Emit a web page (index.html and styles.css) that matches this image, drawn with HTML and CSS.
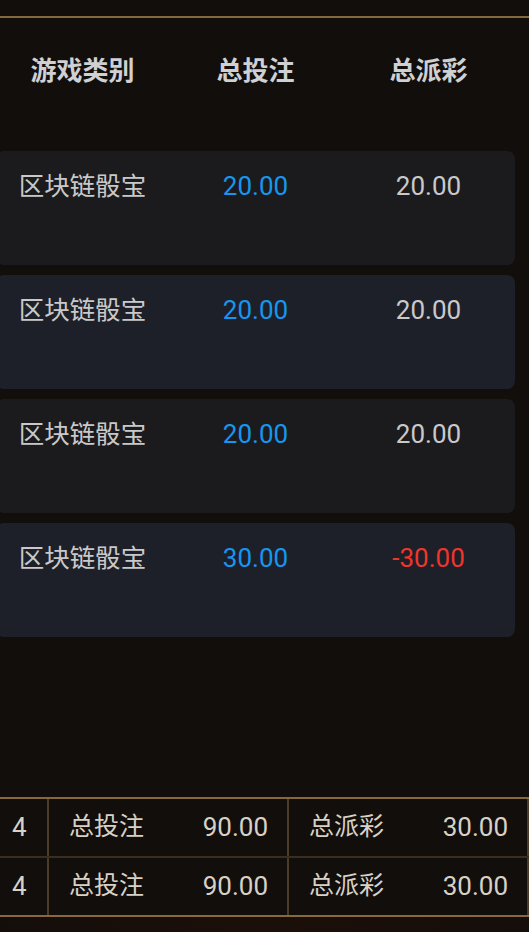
FILE: index.html
```html
<!DOCTYPE html>
<html lang="zh-CN">
<head>
<meta charset="utf-8">
<title>投注记录</title>
<link rel="stylesheet" href="styles.css">
</head>
<body>
<div class="page">
  <div class="top-rule"></div>
  <div class="table">
    <div class="thead">
      <div class="th">游戏类别</div>
      <div class="th">总投注</div>
      <div class="th">总派彩</div>
    </div>
    <div class="rows">
      <div class="card odd">
        <div class="cell name">区块链骰宝</div>
        <div class="cell num blue">20.00</div>
        <div class="cell num">20.00</div>
      </div>
      <div class="card even">
        <div class="cell name">区块链骰宝</div>
        <div class="cell num blue">20.00</div>
        <div class="cell num">20.00</div>
      </div>
      <div class="card odd">
        <div class="cell name">区块链骰宝</div>
        <div class="cell num blue">20.00</div>
        <div class="cell num">20.00</div>
      </div>
      <div class="card even">
        <div class="cell name">区块链骰宝</div>
        <div class="cell num blue">30.00</div>
        <div class="cell num red">-30.00</div>
      </div>
    </div>
  </div>
  <div class="summary">
    <div class="srow">
      <div class="scell count">4</div>
      <div class="scell pair"><span class="label">总投注</span><span class="val">90.00</span></div>
      <div class="scell pair"><span class="label">总派彩</span><span class="val">30.00</span></div>
    </div>
    <div class="srow">
      <div class="scell count">4</div>
      <div class="scell pair"><span class="label">总投注</span><span class="val">90.00</span></div>
      <div class="scell pair"><span class="label">总派彩</span><span class="val">30.00</span></div>
    </div>
  </div>
  <div class="bottom-glow"></div>
</div>
</body>
</html>
```
FILE: styles.css
```css
html, body {
  margin: 0;
  padding: 0;
  background: #110e0c;
}
body {
  width: 529px;
  height: 932px;
  overflow: hidden;
  font-family: Roboto, "Noto Sans CJK SC", sans-serif;
}
.page {
  display: flex;
  flex-direction: column;
  width: 529px;
  height: 932px;
}
.top-rule {
  margin-top: 16px;
  height: 2px;
  background: #84683d;
  flex: none;
}
.table {
  margin-left: -4px;
  width: 519px;
  flex: none;
}
.thead {
  display: grid;
  grid-template-columns: repeat(3, 173px);
  height: 106px;
  align-items: center;
}
.th {
  text-align: center;
  font-size: 26px;
  font-weight: 700;
  color: #cfd0d3;
  line-height: 36px;
}
.rows {
  display: flex;
  flex-direction: column;
  gap: 10px;
  padding-top: 27px;
}
.card {
  height: 114px;
  box-sizing: border-box;
  border-radius: 8px;
  display: grid;
  grid-template-columns: repeat(3, 173px);
  align-items: start;
  padding-top: 17px;
}
.card.odd { background: #1b1b1e; }
.card.even { background: #1e2029; }
.cell {
  text-align: center;
  line-height: 36px;
  font-size: 26px;
  color: #c9c9cb;
}
.cell.name { font-size: 25.5px; }
.cell.blue { color: #1796ee; }
.cell.red { color: #f0352a; }
.summary {
  margin-top: 160px;
  border-top: 2px solid #87693d;
  border-bottom: 2px solid #87693d;
  flex: none;
}
.srow {
  display: grid;
  grid-template-columns: 49px 240px 240px;
  height: 57px;
}
.srow + .srow {
  border-top: 2px solid #3a2f1f;
}
.scell {
  border-right: 2px solid #4a3c26;
  display: flex;
  align-items: center;
  color: #d8d1c5;
  font-size: 25px;
  line-height: 36px;
  padding-bottom: 2px;
}
.count {
  padding-left: 12px;
  font-size: 26px;
}
.pair {
  justify-content: space-between;
  padding: 0 19px 2px 20px;
}
.pair .val { font-size: 26px; }
.bottom-glow {
  flex: 1;
  background: linear-gradient(90deg, #140e0b 0%, #1c0f09 50%, #150e0b 100%);
}
```
